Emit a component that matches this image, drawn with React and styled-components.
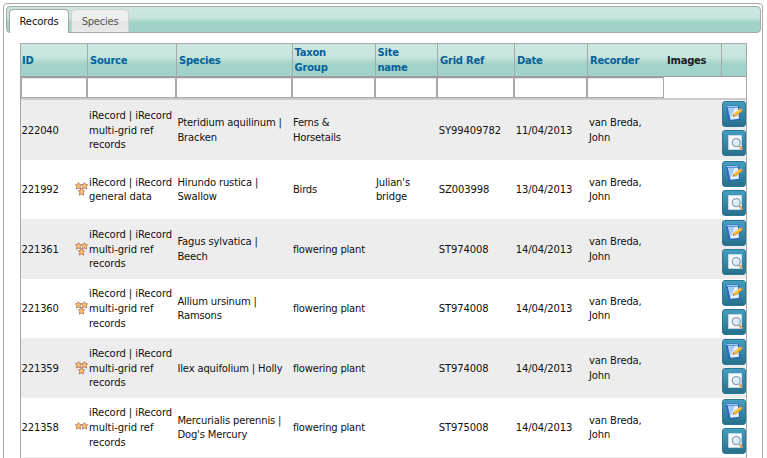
import React from 'react';
import styled, { createGlobalStyle } from 'styled-components';

const Global = createGlobalStyle`
  * { box-sizing: border-box; }
  body { margin: 0; background: #fff; overflow: hidden; }
`;

const COLUMNS = '66px 89px 115.5px 83px 62.5px 77px 73px 77px 57px 25px';
const MINT = 'linear-gradient(#cce7e1 0%, #c6e4dd 42%, #a2d3ca 62%, #9fd2c8 100%)';

const Page = styled.div`
  height: 458px;
  padding: 3px 4px 0 3px;
  overflow: hidden;
  font-family: Verdana, 'DejaVu Sans', sans-serif;
  font-size: 10px;
  color: #111;
`;

const Panel = styled.div`
  height: 480px;
  padding: 2px 1px;
  border: 1px solid #a8a8a8;
  border-radius: 4px;
`;

const TabBar = styled.div`
  display: flex;
  gap: 2px;
  height: 27px;
  padding: 2px 0 0 2px;
  margin-left: 1px;
  border: 1px solid #a8a8a8;
  border-radius: 4px;
  background: ${MINT};
`;

const Tab = styled.div`
  width: ${p => p.$active ? 60 : 58}px;
  height: ${p => p.$active ? 24 : 23}px;
  border: 1px solid ${p => p.$active ? '#a8a8a8' : '#d0d0d0'};
  border-bottom: 0;
  border-radius: 4px 4px 0 0;
  background: ${p => p.$active ? '#fff' : 'linear-gradient(#eee 48%, #e4e4e4 52%, #e8e8e8)'};
  color: ${p => p.$active ? '#111' : '#555'};
  line-height: 23px;
  text-align: center;
  letter-spacing: ${p => p.$active ? -0.1 : -0.25}px;
`;

const Table = styled.div`
  width: 727px;
  margin: 10px 0 0 15px;
  border: 1px solid #a8a8a8;
`;

const HeadRow = styled.div`
  display: grid;
  grid-template-columns: ${COLUMNS};
  height: 33px;
  border-bottom: 1px solid #a39fa1;
  background: ${MINT};
`;

const HeadCell = styled.div`
  display: flex;
  align-items: center;
  padding-left: ${p => p.$plain ? 3 : p.$divided ? 2 : 1}px;
  border-left: ${p => p.$divided ? '1px solid #a8a8a8' : '0'};
  color: ${p => p.$plain ? '#1b1b1b' : '#05609a'};
  font-weight: bold;
  line-height: 15px;
  letter-spacing: -0.25px;
  white-space: pre;
`;

const FilterRow = styled.div`
  display: grid;
  grid-template-columns: ${COLUMNS};
  height: 23px;
  border-bottom: 2px solid #ccc;
`;

const FilterInput = styled.input`
  width: 100%;
  min-width: 0;
  height: 21px;
  padding: 0 2px;
  border: 1px solid #a9a9a9;
  border-top-color: #999;
  border-radius: 0;
  background: #fff;
  box-shadow: inset 0 1px 1px #e6e6e6;
  outline: 0;
`;

const Row = styled.div`
  display: grid;
  grid-template-columns: ${COLUMNS};
  height: ${p => p.$height}px;
  background: ${p => p.$shaded ? '#ededed' : '#fff'};
`;

const Cell = styled.div`
  display: flex;
  align-items: center;
  justify-content: space-between;
  padding: 1.6px 0 0 ${p => p.$inset ?? 1.4}px;
  line-height: 14.6px;
  letter-spacing: ${p => p.$spacing ?? -0.15}px;
  white-space: pre;
`;

const Actions = styled.div`
  display: flex;
  flex-direction: column;
  gap: 3px;
  padding: 1px 0 0 1px;
`;

const ActionButton = styled.button`
  display: flex;
  align-items: center;
  justify-content: center;
  width: 24px;
  height: 26px;
  padding: 0;
  border: 1px solid #2b7896;
  border-radius: 3px;
  background: linear-gradient(#459ebf, #28708d);
`;

const Icon = styled.svg`
  flex: none;
  width: 18px;
  height: 18px;
`;

function EditIcon() {
  return (
    <Icon viewBox="0 0 18 18">
      <path d="M.8 1h12.6l1.2 13.6-10.2 1.2z" fill="#2f6fd0" stroke="#2258b4" strokeWidth=".5" />
      <path d="M3 2.8h10l1 11-8.4 1z" fill="#e4f1fe" />
      <path d="M3.2 3h6.6l-4 9.6z" fill="#a3cbf6" />
      <path d="M1.4 1.6h11.6" stroke="#a9d0f7" />
      <path d="m8 11.2.8-2.5 6.2-4.8 2.2 2.2-6.2 4.9z" fill="#fdb52a" stroke="#b87526" strokeWidth=".4" />
      <path d="m9.4 8.9 6-4.6" stroke="#ffe480" />
      <path d="m15 3.9 1-.7 2 2-.8 1z" fill="#e39a5c" />
      <path d="m7.7 11.5.5-1.3 1 .9z" fill="#333" />
    </Icon>
  );
}

function ViewIcon() {
  return (
    <Icon viewBox="0 0 18 18">
      <path d="M3.5 1.5h13v14h-13z" fill="#f6fafd" stroke="#cfe2ee" strokeWidth=".7" />
      <circle cx="11.3" cy="8.6" r="4" fill="#dcebf8" stroke="#8fa4b8" strokeWidth="1.3" />
      <path d="M9.2 8a2.5 2.5 0 0 1 2.6-2" fill="none" stroke="#fff" />
      <path d="m14.2 12 3.3 3.8" stroke="#cf945b" strokeWidth="2" />
      <path d="m14.2 11.7 2.8 3" stroke="#f0ca8d" strokeWidth=".7" />
    </Icon>
  );
}

const STAR = 'M3 .2 4 2l2.1.4-1.4 1.7.5 2.6L3 5.5.8 6.7l.5-2.6L-.1 2.4 2 2z';

const StarsSvg = styled.svg`
  flex: none;
  margin: 0 -1px ${p => p.$raised ? 4 : 2}px 0;
`;

function Stars({ count }) {
  const spots = [[.5, .4], [6.5, .4], [3.5, 6.4]].slice(0, count);
  return (
    <StarsSvg $raised={count < 3} width="13" height={count === 3 ? 14 : 8} viewBox={count === 3 ? '0 0 13 14' : '0 0 13 8'}>
      {spots.map(([x, y]) => (
        <path key={`${x}-${y}`} d={STAR} transform={`translate(${x} ${y})`} fill="#ffc368" stroke="#b37766" strokeWidth=".9" />
      ))}
    </StarsSvg>
  );
}

const HEADINGS = ['ID', 'Source', 'Species', 'Taxon\nGroup', 'Site\nname', 'Grid Ref', 'Date', 'Recorder', 'Images', ''];
const MULTI = 'iRecord | iRecord\nmulti-grid ref\nrecords';

const RECORDS = [
  { id: '222040', stars: 0, height: 60, source: MULTI, species: 'Pteridium aquilinum |\nBracken', group: 'Ferns &\nHorsetails', site: '', grid: 'SY99409782', date: '11/04/2013' },
  { id: '221992', stars: 3, height: 59, source: 'iRecord | iRecord\ngeneral data', species: 'Hirundo rustica |\nSwallow', group: 'Birds', site: "Julian's\nbridge", grid: 'SZ003998', date: '13/04/2013' },
  { id: '221361', stars: 3, height: 60, source: MULTI, species: 'Fagus sylvatica |\nBeech', group: 'flowering plant', site: '', grid: 'ST974008', date: '14/04/2013' },
  { id: '221360', stars: 3, height: 59, source: MULTI, species: 'Allium ursinum |\nRamsons', group: 'flowering plant', site: '', grid: 'ST974008', date: '14/04/2013' },
  { id: '221359', stars: 3, height: 60, source: MULTI, species: 'Ilex aquifolium | Holly', group: 'flowering plant', site: '', grid: 'ST974008', date: '14/04/2013' },
  { id: '221358', stars: 2, height: 59, source: MULTI, species: "Mercurialis perennis |\nDog's Mercury", group: 'flowering plant', site: '', grid: 'ST975008', date: '14/04/2013' },
];

function RecordRow({ record, index }) {
  return (
    <Row $height={record.height} $shaded={index % 2 === 0}>
      <Cell $inset={0.5}>{record.id}{record.stars > 0 && <Stars count={record.stars} />}</Cell>
      <Cell $inset={2} $spacing={-0.08}>{record.source}</Cell>
      <Cell>{record.species}</Cell>
      <Cell $spacing={-0.2}>{record.group}</Cell>
      <Cell>{record.site}</Cell>
      <Cell $inset={1.7} $spacing={-0.1}>{record.grid}</Cell>
      <Cell $inset={1.7} $spacing={-0.1}>{record.date}</Cell>
      <Cell $inset={2}>{'van Breda,\nJohn'}</Cell>
      <Cell />
      <Actions>
        <ActionButton aria-label="Edit"><EditIcon /></ActionButton>
        <ActionButton aria-label="View"><ViewIcon /></ActionButton>
      </Actions>
    </Row>
  );
}

export default function App() {
  return (
    <>
      <Global />
      <Page>
        <Panel>
          <TabBar>
            <Tab $active>Records</Tab>
            <Tab>Species</Tab>
          </TabBar>
          <Table>
            <HeadRow>
              {HEADINGS.map((h, i) => (
                <HeadCell key={i} $divided={i > 0 && h !== 'Images'} $plain={h === 'Images'}>{h}</HeadCell>
              ))}
            </HeadRow>
            <FilterRow>
              {HEADINGS.slice(0, 8).map(h => <FilterInput key={h} aria-label={h} />)}
            </FilterRow>
            {RECORDS.map((r, i) => <RecordRow key={r.id} record={r} index={i} />)}
            <Row $height={60} $shaded />
          </Table>
        </Panel>
      </Page>
    </>
  );
}
